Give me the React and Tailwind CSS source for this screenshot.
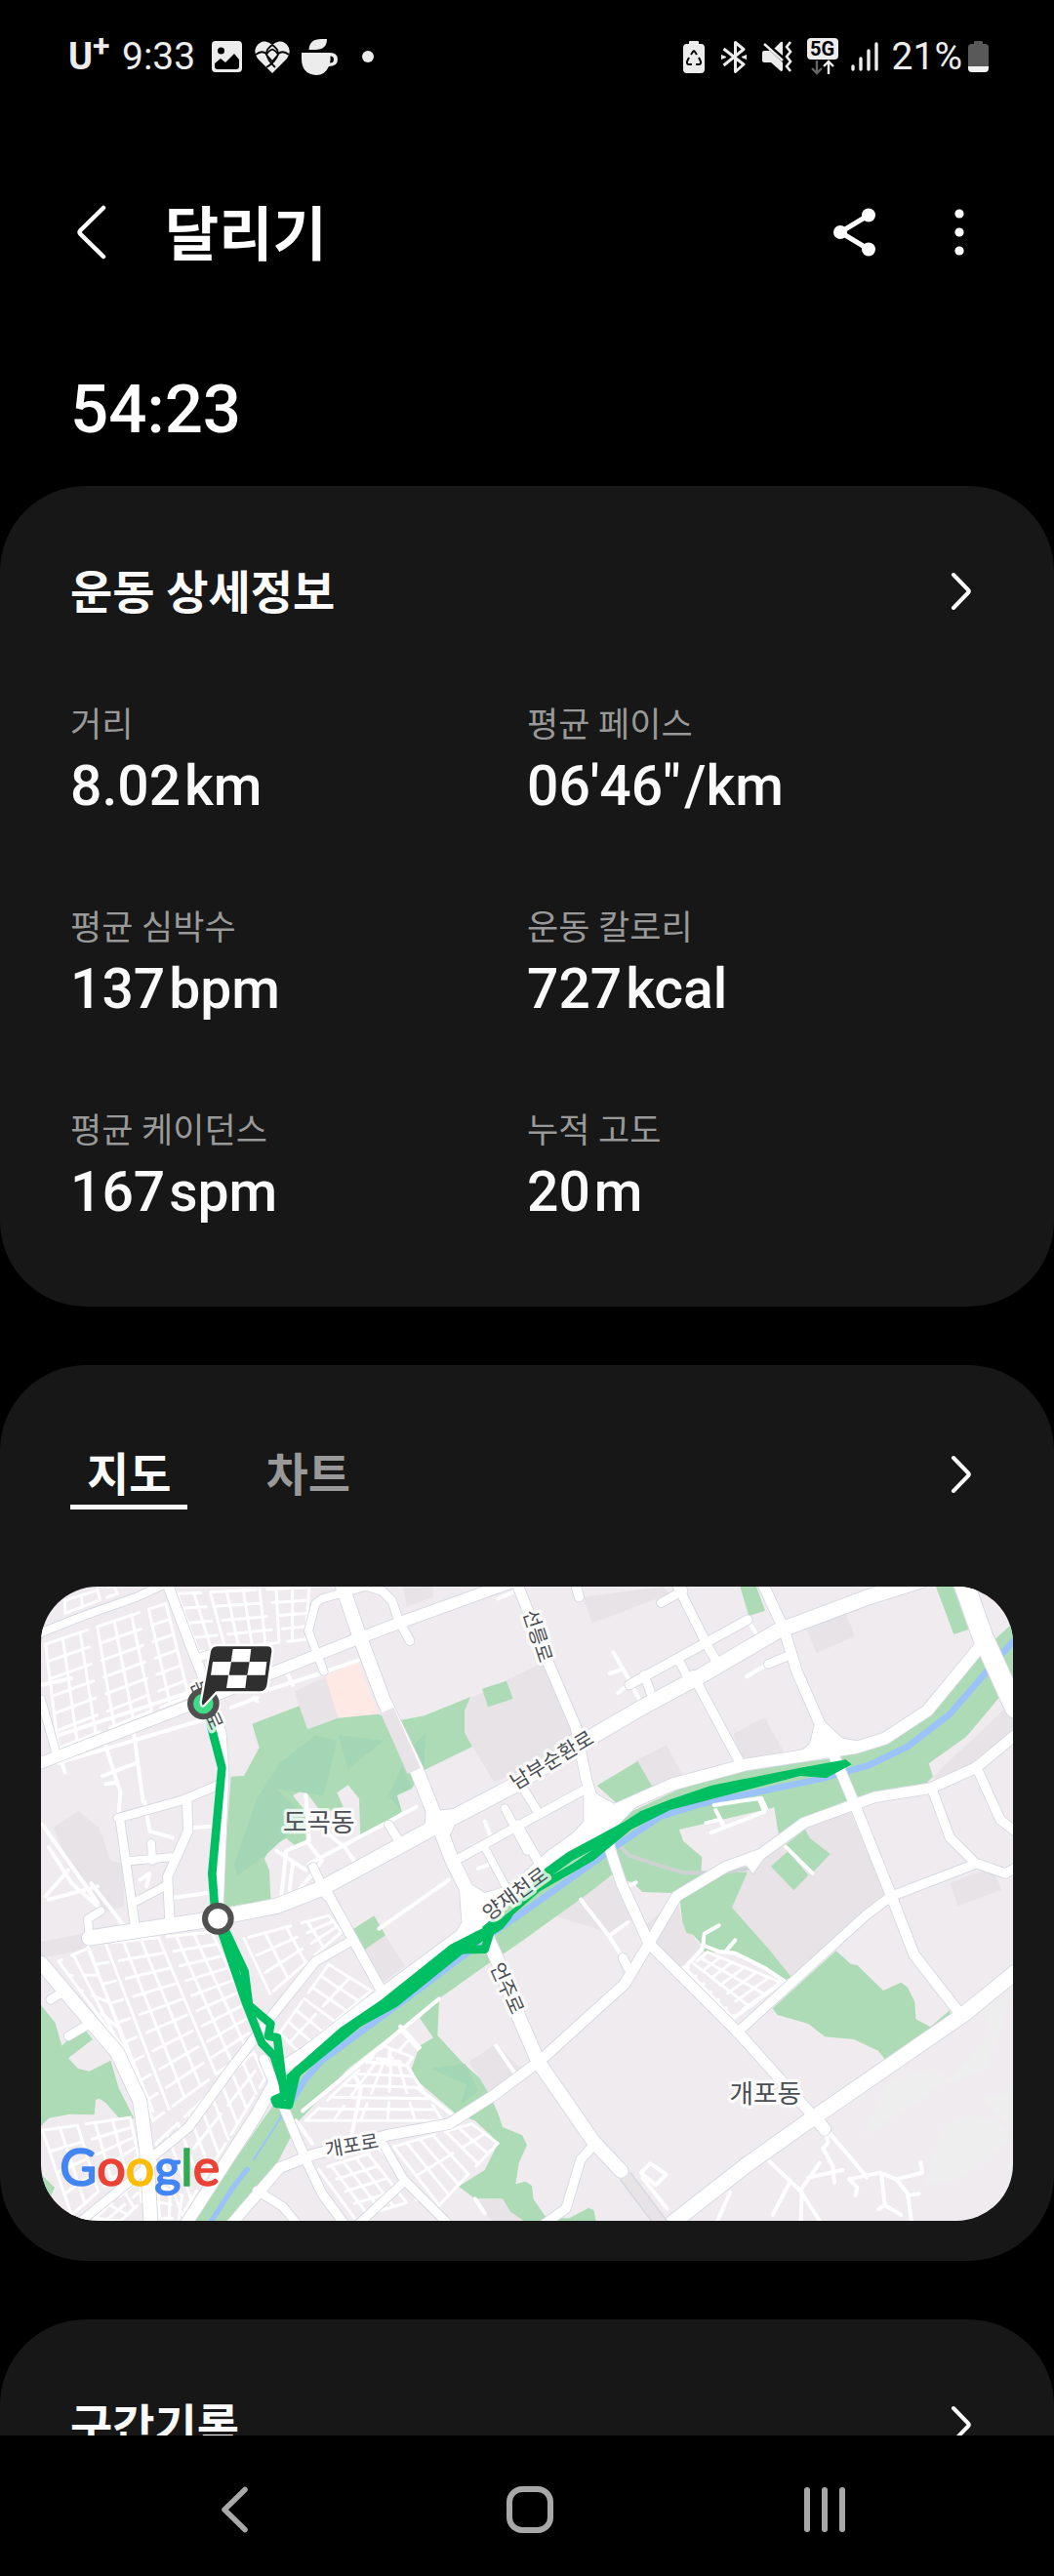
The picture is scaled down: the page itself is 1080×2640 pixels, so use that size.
import React, { useState } from "react";

const STATS = [
  { label: "거리", value: "8.02", unit: "km" },
  { label: "평균 페이스", value: "06'46\"", unit: "/km" },
  { label: "평균 심박수", value: "137", unit: "bpm" },
  { label: "운동 칼로리", value: "727", unit: "kcal" },
  { label: "평균 케이던스", value: "167", unit: "spm" },
  { label: "누적 고도", value: "20", unit: "m" },
];

/* ---------- map data ---------- */

const GREENS = [
  "M685,470L830,415L855,487L950,452L1070,440L1145,458L1215,445L1357,387L1338,430L1338,497L1362,540L1213,613L1175,670L1130,690L1145,740L1018,822L1014,700L980,658L946,682L965,725L900,745L845,672L810,690L850,740L850,835L820,847L790,822L745,845L723,885L738,920L742,1010L590,1036L620,632L660,630L707,543Z",
  "M1392,362L1467,338L1487,393L1410,418Z",
  "M2185,48L2235,48L2262,122L2212,138Z",
  "M2787,48L2840,48L2887,180L2842,195Z",
  "M3024,160L2925,250L2780,430L2630,530L2480,575L2200,610L2000,670L1850,740L1640,880L1470,1030L1300,1150L900,1490L780,1600L500,1998L620,1998L765,1815L830,1690L980,1530L1260,1315L1400,1215L1500,1148L1720,990L1790,935L1858,960L1885,987L1975,990L2000,1010L2008,1080L2020,1112L2040,1118L2060,1140L2075,1170L2165,1175L2260,1225L2320,1260L2342,1248L2275,1165L2160,1035L2208,925L2065,928L2068,880L2010,830L1998,795L2290,727L2303,808L2380,765L2500,710L2600,685L2755,655L2778,632L2765,592L2880,510L2985,385L3024,350Z",
  "M1745,660L1870,585L1920,672L1815,722Z",
  "M2325,842L2385,795L2400,822L2462,870L2405,930Z",
  "M2280,908L2332,862L2395,935L2350,982Z",
  "M2285,1345L2480,1168L2525,1208L2545,1212L2625,1290L2680,1265L2700,1280L2722,1325L2725,1378L2770,1402L2830,1350L2830,1380L2635,1508L2610,1475L2535,1440L2445,1432L2395,1392L2300,1365Z",
  "M36,1335L80,1390L100,1460L130,1430L175,1415L195,1440L120,1498L150,1530L185,1538L250,1505L275,1590L322,1682L280,1687L235,1635L215,1622L204,1626L200,1672L125,1670L60,1682L36,1706Z",
  "M990,1105L1060,1060L1095,1120L1030,1165Z",
  "M1200,1375L1260,1315L1255,1428L1330,1510L1385,1560L1410,1602L1440,1665L1455,1710L1515,1735L1530,1765L1505,1820L1495,1885L1525,1877L1545,1890L1550,1932L1590,1990L1660,1990L1720,1958L1735,1965L1742,1998L1520,1998L1480,1970L1455,1930L1370,1930L1320,1892L1400,1842L1442,1757L1370,1690L1310,1668L1190,1565L1175,1530L1200,1460L1242,1435Z",
  "M36,1855L78,1895L62,1932L36,1900Z",
];

const SHADES = [
  "M815,370L915,325L955,452L855,487Z",
  "M75,790L150,738L215,790L250,890L290,900L290,1030L235,1050L180,960L120,900Z",
  "M1700,80L1950,48L1970,70L1732,160Z",
  "M1360,390L1600,270L1690,520L1500,620L1430,650L1362,540L1338,497L1338,430Z",
  "M2390,180L2510,130L2538,200L2420,252Z",
  "M2165,500L2260,450L2322,560L2190,595Z",
  "M1865,583L1958,535L2010,630L1920,672Z",
  "M2250,880L2380,780L2520,735L2640,1000L2342,1248L2160,1035L2208,925Z",
  "M2830,960L2960,910L2988,980L2855,1030Z",
  "M2780,630L3024,400L3024,500L2900,600L2780,650Z",
  "M36,1140L190,1110L190,1160L36,1190Z",
  "M1030,1165L1092,1118L1155,1215L1080,1270Z",
  "M1350,1510L1435,1455L1520,1540L1410,1600L1385,1560Z",
  "M1880,1100L1990,1010L2008,1080L2075,1170L1990,1230L1905,1145Z",
  "M1600,1055L1730,960L1800,940L1850,1070L1790,1115Z",
  "M1380,1935L1455,1930L1520,1998L1420,1998Z",
  "M1150,50L1240,48L1240,80L1160,110Z",
];

const FAINT = [
  "M2560,1740L2640,1570L2780,1530L2825,1565L2960,1420L2925,1340L3024,1300L2940,1530L2780,1590L2720,1640Z",
  "M2750,1890L2810,1705L2890,1670L2990,1700L3024,1740L2860,1870Z",
  "M2930,1620L3024,1600L3024,1720Z",
];

const PARK_TONES = [
  "M630,900L700,700L770,590L880,505L945,522L905,690L760,670L850,760L720,880L640,935Z",
  "M950,505L1090,522L980,608Z",
  "M1235,1530L1340,1515L1380,1600L1325,1640L1345,1580Z",
  "M1105,690L1145,600L1175,665L1130,690L1145,740Z",
  "M1175,540L1218,500L1213,610Z",
];

const ROADS = [
  ["M36,190L160,140L330,80L410,44", 24],
  ["M425,40L500,240L540,340L590,500L598,620L580,1060", 30],
  ["M36,590L500,410L750,312L1000,212L1150,155L1480,36", 34],
  ["M515,268L600,240", 24],
  ["M36,395L80,550", 24],
  ["M1045,44L900,85L880,100L858,185L905,308", 24],
  ["M1030,44L1085,62L1115,92L1135,150L1170,215", 26],
  ["M960,40L1015,200L1090,400L1190,610L1250,760L1300,890L1360,1010L1400,1110L1445,1210L1500,1360L1565,1510L1735,1755L1820,1845", 42],
  ["M185,1128L530,1075L760,1030L900,975L1250,785L1480,665L1720,515L1900,410L2060,325L2300,185L2580,80L2740,30", 46],
  ["M185,1120L180,1070L220,1045", 24],
  ["M1500,40L1590,270L1680,480L1712,640L1730,700L1770,800L1790,870L1820,960L1905,1145L2180,1420L2400,1665L2445,1720", 32],
  ["M2925,230L2760,430L2630,515L2540,543L2200,596L1980,655L1800,735L1600,880L1480,990L1340,1110L1050,1325L850,1480L780,1525L700,1670L590,1840L480,2010", 36],
  ["M2255,40L2320,180L2360,310L2430,470L2470,560L2530,700L2650,1000L2720,1180L2860,1360", 32],
  ["M2870,30L2930,200L3030,420", 62],
  ["M1990,40L2090,240L2120,290", 28],
  ["M2040,320L2190,600", 28],
  ["M1845,350L2208,150", 28],
  ["M1942,98L2010,60", 26],
  ["M1890,320L1920,400", 26],
  ["M1995,270L2030,340", 26],
  ["M2272,286L2340,258", 26],
  ["M1680,44L1690,80", 28],
  ["M3030,505L2910,605L2770,668L2600,695L2530,720L2380,775L2250,870L2140,910L1990,1000L1905,1145L1830,1270L1565,1510L1430,1610L1290,1700L1100,1735L870,1795L770,1835L620,2010", 32],
  ["M2775,670L2830,820L2910,900L2650,1000L2570,1060L2175,1420", 28],
  ["M2910,600L2985,765L3030,800", 28],
  ["M2900,895L3000,930L3030,915", 28],
  ["M3030,1235L2870,1365L2420,1675L2390,1695L2200,1830L1970,2010", 46],
  ["M2430,1690L2450,1715", 28],
  ["M1825,1190L1840,1220", 28],
  ["M1735,1765L1695,1810L1650,1960L1580,2010", 28],
  ["M36,1205L150,1340L270,1480L340,1630L360,1780L374,2010", 42],
  ["M65,1318L110,1290", 26],
  ["M120,1430L180,1395", 26],
  ["M380,1800L490,1710L620,1530L760,1350L880,1200L985,1140", 28],
  ["M160,1998L380,1820", 26],
  ["M720,1500L850,1810L900,1915L970,2010", 28],
  ["M905,970L1085,1295", 30],
  ["M1090,1765L1150,1870L1290,2010", 26],
  ["M700,1905L780,1955L825,2010", 26],
  ["M1150,1880L1010,2010", 26],
  ["M272,760L470,705L600,650", 26],
  ["M278,760L325,1090", 26],
  ["M485,710L488,800L425,940L432,1080", 28],
  ["M305,892L435,880", 24],
  ["M330,1015L425,965", 24],
  ["M375,838L378,890", 24],
  ["M1310,890L1500,785L1715,668", 26],
  ["M1500,640L1560,735", 26],
  ["M1500,780L1580,920", 28],
  ["M1400,850L1470,980", 22],
  ["M1462,730L1530,860", 24],
  ["M1105,780L1140,835", 26],
  ["M872,910L915,1000", 26],
];

const JUNCTIONS = [
  "M1220,740L1330,730L1285,830L1215,800Z",
  "M1705,650L1750,690L1815,725L1900,690L1800,790L1640,870L1600,880L1705,770Z",
  "M2415,470L2445,465L2500,515L2560,525L2540,560L2350,575L2400,530Z",
  "M1320,940L1400,990L1500,960L1400,1090L1290,1150L1330,1080Z",
  "M2200,900L2260,880L2225,930Z",
];

const PATHS = [
  "M90,560L110,620", "M90,505L500,370", "M40,350L130,330", "M90,590L560,450", "M320,490L350,710", "M235,540L280,680L275,740",
  "M225,630L330,590", "M235,655L270,650", "M40,780L210,1020", "M120,920L50,1000", "M210,970L60,1010", "M60,850L130,960L210,1030", "M190,960L290,1090",
  "M355,710L370,800L440,820", "M500,790L560,785", "M440,1005L550,990", "M340,950L370,930L360,970",
  "M620,420L700,390M690,390L700,400", "M720,370L880,320L1010,275", "M790,310L810,350", "M860,900L1190,725", "M970,850L1005,900",
  "M850,690L860,830L790,860L775,1000", "M860,840L900,890L880,920L820,990", "M760,860L850,920", "M810,900L800,980", "M910,800L970,850",
  "M1075,1100L1290,950", "M1380,915L1420,900", "M1400,770L1420,820", "M1440,85L1500,60", "M1795,250L1830,310L1875,395", "M1785,315L1815,305", "M1810,375L1840,350",
  "M2205,325L2280,280", "M2215,160L2232,190", "M2105,720L2250,698L2265,730", "M2245,705L2260,740L2095,805", "M2110,735L2135,785", "M2080,775L2120,765",
  "M2325,848L2408,930", "M1695,1010L1780,1120L1825,1190", "M1785,1120L1840,1080", "M1835,970L1865,958",
  "M2015,1220L2070,1160L2075,1115L2120,1090", "M2070,1150L2120,1170L2170,1175L2260,1220L2320,1260L2160,1378L2010,1220", "M2140,1170L2170,1135",
  "M2275,1815L2370,1905L2430,1998", "M2370,1905L2430,1820", "M2395,1865L2500,1842", "M2335,1885L2285,1980", "M2375,1910L2372,1998", "M2155,1910L2115,1998",
  "M2450,1730L2455,1760L2440,1775L2470,1830L2475,1880", "M2460,1730L2530,1810L2575,1865", "M2520,1870L2615,1850L2665,1870L2700,1915L2712,1998", "M2520,1870L2545,1895L2540,1920",
  "M2620,1860L2630,1950L2680,1980M2630,1950L2610,1962", "M2665,1870L2745,1850L2740,1818", "M2700,1920L2735,1915",
  "M1880,1850L1910,1822L1958,1855L1925,1888Z", "M1885,1865L1960,1960", "M1435,1460L1490,1540",
  "M840,1660L1260,1315", "M1140,1400L1200,1465", "M820,1690L870,1760", "M1195,1590L1310,1680", "M1370,1930L1400,1975",
  "M1110,1470L1105,1520M1070,1500L1140,1510", "M1000,1550L1020,1590L990,1740",
];

/* Street grids: four corners of a district and the number of streets each way. */
const DISTRICTS = [
  [[50, 225], [420, 100], [490, 385], [90, 545], 7, 6],
  [[110, 90], [260, 44], [270, 70], [110, 130], 3, 1],
  [[455, 70], [860, 50], [850, 210], [520, 250], 8, 4],
  [[180, 1150], [560, 1110], [720, 1440], [380, 1690], 7, 9],
  [[90, 1200], [180, 1160], [380, 1660], [280, 1460], 2, 6],
  [[660, 1130], [920, 1060], [960, 1110], [740, 1300], 4, 3],
  [[770, 1420], [920, 1210], [1050, 1290], [830, 1480], 6, 2],
  [[390, 1760], [690, 1480], [725, 1560], [470, 1980], 9, 2],
  [[850, 1690], [1040, 1510], [1160, 1520], [1270, 1690], 5, 5],
  [[1040, 1510], [1140, 1410], [1195, 1470], [1160, 1520], 2, 2],
  [[890, 1840], [1080, 1780], [1200, 1930], [1000, 1990], 5, 4],
  [[1120, 1770], [1360, 1700], [1440, 1760], [1260, 1950], 6, 2],
  [[40, 1720], [310, 1680], [335, 1800], [130, 1980], 5, 4],
  [[200, 1990], [340, 1870], [345, 1940], [280, 1998], 3, 2],
  [[395, 1890], [470, 1920], [460, 1990], [400, 1990], 2, 2],
  [[2020, 1225], [2085, 1172], [2310, 1265], [2160, 1372], 3, 6],
];

function districtPath([a, b, c, d, n, m], crosswise) {
  const mix = (p, q, t) => [p[0] + (q[0] - p[0]) * t, p[1] + (q[1] - p[1]) * t];
  const seg = (p, q) => "M" + p.map(Math.round).join(",") + "L" + q.map(Math.round).join(",");
  let out = "";
  if (crosswise) {
    for (let j = 0; j <= m; j++) out += seg(mix(a, d, j / m), mix(b, c, j / m));
  } else {
    for (let i = 0; i <= n; i++) out += seg(mix(a, b, i / n), mix(d, c, i / n));
  }
  return out;
}

const LABELS = [
  { text: "도곡동", x: 890, y: 800, size: 80, angle: 0 },
  { text: "개포동", x: 2263, y: 1635, size: 80, angle: 0 },
  { text: "개포로", x: 995, y: 1787, size: 60, angle: -10 },
  { text: "남부순환로", x: 1618, y: 600, size: 62, angle: -31 },
  { text: "양재천로", x: 1506, y: 1010, size: 62, angle: -36 },
  { text: "선릉로", x: 1543, y: 206, size: 60, angle: 72 },
  { text: "언주로", x: 1450, y: 1292, size: 60, angle: 66 },
  { text: "논현로", x: 527, y: 420, size: 58, angle: 66 },
];

const WORDMARK = [
  ["G", "#4285f4"],
  ["o", "#ea4335"],
  ["o", "#fbbc05"],
  ["g", "#4285f4"],
  ["l", "#34a853"],
  ["e", "#ea4335"],
];

function RouteMap() {
  return (
    <svg
      viewBox="36 48 2988 1950"
      className="block h-auto w-full"
      role="img"
      aria-label="달리기 경로 지도"
      strokeLinejoin="round"
      strokeLinecap="round"
      fill="none"
    >
      <rect x="36" y="48" width="2988" height="1950" fill="#efebef" />
      <g fill="#e7e3e7">{SHADES.map((d) => <path key={d} d={d} />)}</g>
      <g fill="#eeeeee">{FAINT.map((d) => <path key={d} d={d} />)}</g>
      <path d="M910,325L1010,280L1072,440L950,453Z" fill="#ffe9e4" />
      <g fill="#acdbb6">{GREENS.map((d) => <path key={d} d={d} />)}</g>
      <g fill="#a2d6b4">{PARK_TONES.map((d) => <path key={d} d={d} />)}</g>
      <path d="M1815,845L1845,875L1920,900L2010,928L2130,928L2210,915" stroke="#cfd2d3" strokeWidth="12" />
      <path
        d="M3030,210L2990,255L2830,440L2700,540L2580,598L2430,640L2200,688L2060,718L1940,755L1820,835L1700,920L1560,1020L1430,1110L1200,1285L900,1505L850,1560L780,1670"
        stroke="#9cc3f9"
        strokeWidth="20"
      />
      <path d="M780,1670L690,1810" stroke="#9cc3f9" strokeWidth="6" />
      <path d="M670,1840L630,1890L560,1998" stroke="#9cc3f9" strokeWidth="16" />
      <g stroke="#ffffff" strokeWidth="9">
        {DISTRICTS.map((d, i) => (
          <g key={i}>
            <path d={districtPath(d, false)} />
            <path d={districtPath(d, true)} strokeDasharray="135 34" strokeDashoffset={i * 31} />
          </g>
        ))}
      </g>
      <g stroke="#ffffff" strokeWidth="12">{PATHS.map((d) => <path key={d} d={d} />)}</g>
      <g stroke="#d3d7df">{ROADS.map(([d, w]) => <path key={d} d={d} strokeWidth={w + 5} />)}</g>
      <g fill="#ffffff" stroke="#d3d7df" strokeWidth="5">{JUNCTIONS.map((d) => <path key={d} d={d} />)}</g>
      <g stroke="#ffffff">{ROADS.map(([d, w]) => <path key={d} d={d} strokeWidth={w} />)}</g>
      <g fill="#ffffff">{JUNCTIONS.map((d) => <path key={d} d={d} />)}</g>
      <path d="M1100,428L1183,615" stroke="#e7e3e7" strokeWidth="44" strokeLinecap="butt" />
      <path d="M1832,1860L1945,2010" stroke="#d3d7df" strokeWidth="42" strokeLinecap="butt" />
      <path d="M1832,1860L1945,2010" stroke="#e7e3e7" strokeWidth="34" strokeLinecap="butt" />

      <g stroke="#00bf63" strokeWidth="26" strokeLinecap="butt">
        <path d="M553,455L566,505L592,605L562,930L572,1060" />
        <path d="M585,1090L665,1325L715,1452L752,1490L790,1610L755,1625L760,1638L798,1642L822,1540" />
        <path d="M600,1100L662,1232L675,1335L742,1392L735,1430L762,1435L780,1580L785,1620" />
        <path d="M1300,1165L1400,1163L1425,1085L1400,1105" />
        <path d="M790,1585L830,1530" />
      </g>
      <path
        d="M790,1550L955,1405L1080,1320L1295,1148L1440,1075L1500,1030L1480,1070L1455,1100L1330,1180L1130,1340L1020,1400L835,1550L795,1600Z"
        fill="#00bf63"
      />
      <path
        d="M1450,1090L1585,915L1655,865L1830,770L1880,738L1970,703L2095,660L2370,605L2510,580L2528,595L2450,637L2370,630L1970,735L1850,795L1735,890L1570,985Z"
        fill="#00bf63"
      />
      <path d="M1608,935L1670,890L1732,857L1670,900Z" fill="#a6dfb8" />

      <g
        fill="#4b4e53"
        stroke="#ffffff"
        strokeOpacity="0.75"
        strokeWidth="20"
        paintOrder="stroke"
        textAnchor="middle"
        className="[font-family:'Noto_Sans_CJK_KR',sans-serif]"
      >
        {LABELS.map((l) => (
          <text key={l.text} fontSize={l.size} transform={`translate(${l.x} ${l.y}) rotate(${l.angle})`}>
            {l.text}
          </text>
        ))}
      </g>

      <circle cx="580" cy="1069" r="40" fill="#ffffff" stroke="#505050" strokeWidth="18" />
      <circle cx="535" cy="408" r="40" fill="#3edc87" stroke="#505050" strokeWidth="18" />
      <path
        d="M578,228H730Q751,228 748,250L734,350Q731,373 710,373H576L540,412Q528,422 527,404L554,250Q557,228 578,228Z"
        fill="#2f2f2f"
        stroke="#ffffff"
        strokeWidth="7"
      />
      <path
        d="M626,240H682L677,279H730L725,320H669L664,360H606L612,320H558L564,279H620Z"
        fill="#ffffff"
      />
      <path d="M621,280H677L670,320H614Z" fill="#2f2f2f" />

      <text x="94" y="1891" fontSize="156" strokeWidth="5" className="[font-family:Lato,sans-serif]">
        {WORDMARK.map(([letter, color], i) => (
          <tspan key={i} fill={color} stroke={color}>{letter}</tspan>
        ))}
      </text>
    </svg>
  );
}

/* ---------- small parts ---------- */

function Chevron() {
  return (
    <svg width="22" height="40" viewBox="0 0 22 40" fill="none" stroke="#fafafa" strokeWidth="4" strokeLinecap="round" strokeLinejoin="round">
      <path d="M3 3L18 18.5Q19.500 20 18 21.500L3 37" />
    </svg>
  );
}

function MoreButton({ label }) {
  return (
    <button type="button" aria-label={label} className="flex h-[72px] items-center">
      <Chevron />
    </button>
  );
}

function CardTitle({ children, moreLabel }) {
  return (
    <div className="flex items-center justify-between pr-[84px] pl-[72px]">
      <h2 className="pt-1 text-[47px] leading-[72px] font-bold text-[#fafafa]">{children}</h2>
      <MoreButton label={moreLabel} />
    </div>
  );
}

function Stat({ label, value, unit }) {
  return (
    <div>
      <dt className="text-[35px] leading-[52px] text-[#999999]">{label}</dt>
      <dd className="flex gap-1 text-[57px] leading-[72px] font-medium text-[#fafafa]">
        <span>{value}</span>
        <span>{unit}</span>
      </dd>
    </div>
  );
}

function StatusBar() {
  return (
    <div className="flex h-[116px] shrink-0 items-center justify-between pr-[67px] pl-[70px] text-[39px] leading-none text-[#ececec]">
      <div className="flex items-center">
        <span className="flex w-[55px] items-center text-[38px] font-bold">
          U<span className="-mt-[22px] text-[32px]">+</span>
        </span>
        <span className="w-[92px]">9:33</span>
        <svg width="31" height="32" viewBox="0 0 31 32" className="mr-[13px]">
          <path fill="#ececec" fillRule="evenodd" d="M4 0H27Q31 0 31 4V28Q31 32 27 32H4Q0 32 0 28V4Q0 0 4 0ZM9.500 6.500A3.500 3.500 0 1 0 9.500 13.500A3.500 3.500 0 1 0 9.500 6.500ZM3 23V26Q3 29 6 29H25Q28 29 28 26V19L23 13L14 22L9 18Z" />
        </svg>
        <svg width="36" height="33" viewBox="0 0 36 33" className="mr-[12px]">
          <path fill="#ececec" d="M18 33L3 18Q-1.500 12 1.500 6Q5 0 11 .5Q15 1 18 4Q21 1 25 .5Q31 0 34.500 6Q37.500 12 33 18Z" />
          <g fill="none" stroke="#000" strokeWidth="1.800">
            <path d="M1 14Q7 9 12 13Q14 21 21 27" />
            <path d="M35 14Q29 9 24 13Q22 21 12 27" />
            <path d="M18 4Q12 8 12 13" />
            <path d="M18 4Q24 8 24 13" />
          </g>
          <path fill="#ececec" stroke="#000" strokeWidth="1.600" d="M18 8.500Q22 10 24 14L18 21L12 14Q14 10 18 8.500Z" />
        </svg>
        <svg width="37" height="37" viewBox="0 0 37 37" className="mr-[25px]">
          <path fill="#ececec" d="M7.500 11Q8 0 20 0H26Q26 11 14 11ZM0 14H29Q37 14 37 21Q37 28 28 28Q24 37 15 37Q0 36 0 20Z" />
          <path fill="#000" d="M29.500 17.500Q33 17.500 33 21Q33 24.500 29 24.500Q30 21 29.500 17.500Z" />
        </svg>
        <span className="size-3 rounded-full bg-[#ececec]" />
      </div>
      <div className="flex items-center">
        <svg width="22" height="33" viewBox="0 0 22 33" className="mr-[17px]">
          <path fill="#ececec" d="M7 0H15Q16 0 16 1V3H19Q22 3.500 22 7V29Q22 33 18 33H4Q0 33 0 29V7Q0 3.500 3 3H6V1Q6 0 7 0Z" />
          <path fill="none" stroke="#000" strokeWidth="2" d="M8 14L10 11Q11 9.500 12 11L14 14M16 17L18 21Q18.500 24 16 24H13M9 24H6Q3.500 24 4 21L6 17" />
        </svg>
        <svg width="26" height="33" viewBox="0 0 26 33" fill="none" stroke="#ececec" strokeWidth="3" strokeLinejoin="round" className="mr-[16px]">
          <path d="M2.500 8L23 24L14.500 31.500V1.500L23 8.500L2.500 25" />
          <path d="M0 14.500L5 16.500L0 18.500ZM26 14.500L21 16.500L26 18.500Z" strokeWidth="1" fill="#ececec" />
        </svg>
        <svg width="31" height="32" viewBox="0 0 31 32" fill="#ececec" className="mr-[15px]">
          <path d="M0 12Q0 10 2 10H8L21 22V30Q20 32 18 30L9 22H2Q0 22 0 20Z" />
          <path d="M12 8L19 1Q21 0 21 2V15Z" />
          <path d="M3 1L23 19" stroke="#000" strokeWidth="3" />
          <path d="M2 3L21 20" stroke="#ececec" strokeWidth="2.400" />
          <path d="M29 1L25 6L29 11L25 16L29 21L25 26L29 31" fill="none" stroke="#ececec" strokeWidth="2.600" />
        </svg>
        <span className="mr-[13px] flex flex-col items-center">
          <span className="h-[22px] w-8 rounded-[4px] bg-[#ececec] text-center text-[20px] leading-[23px] font-bold text-black">5G</span>
          <svg width="24" height="16" viewBox="0 0 24 16" fill="none" strokeWidth="2.400">
            <path d="M6 1V14M1 9L6 14L11 9" stroke="#666" />
            <path d="M18 15V2M13 7L18 2L23 7" stroke="#ececec" />
          </svg>
        </span>
        <svg width="28" height="30" viewBox="0 0 28 30" fill="none" stroke="#ececec" strokeWidth="3.400" strokeLinecap="round" className="mr-[14px]">
          <path d="M2 25V28M10 17V28M18 9V28M26 2V28" />
        </svg>
        <span className="mr-[6px]">21%</span>
        <svg width="21" height="32" viewBox="0 0 21 32">
          <path fill="#595959" d="M7 0H14Q15 0 15 1V3H18Q21 3.500 21 6V26H0V6Q0 3.500 3 3H6V1Q6 0 7 0Z" />
          <path fill="#f2f2f2" d="M0 26H21V28Q21 32 17 32H4Q0 32 0 28Z" />
        </svg>
      </div>
    </div>
  );
}

export default function App() {
  const [tab, setTab] = useState("지도");
  return (
    <div className="flex h-screen flex-col overflow-hidden bg-black text-white [font-family:Roboto,'Noto_Sans_CJK_KR',sans-serif]">
      <StatusBar />

      <header className="flex h-[244px] shrink-0 items-center pr-[92px] pl-[78px]">
        <button type="button" aria-label="뒤로" className="mr-[60px]">
          <svg width="31" height="56" viewBox="0 0 31 56" fill="none" stroke="#fff" strokeWidth="4.500" strokeLinecap="round" strokeLinejoin="round">
            <path d="M28 3L4.500 26Q2.500 28 4.500 30L28 53" />
          </svg>
        </button>
        <h1 className="grow pt-2 text-[60px] leading-[80px] font-bold">달리기</h1>
        <button type="button" aria-label="공유" className="mr-[80px]">
          <svg width="44" height="50" viewBox="0 0 44 50" fill="#fff" stroke="#fff">
            <path d="M36 7.500L7 25L36 42.500" fill="none" strokeWidth="5" />
            <circle cx="36" cy="7.500" r="7" stroke="none" />
            <circle cx="7" cy="25" r="7" stroke="none" />
            <circle cx="36" cy="42.500" r="7" stroke="none" />
          </svg>
        </button>
        <button type="button" aria-label="옵션 더보기">
          <svg width="10" height="50" viewBox="0 0 10 50" fill="#fff">
            <circle cx="5" cy="6" r="4.600" />
            <circle cx="5" cy="25" r="4.600" />
            <circle cx="5" cy="44" r="4.600" />
          </svg>
        </button>
      </header>

      <main className="min-h-0 grow overflow-y-auto [scrollbar-width:none]">
        <p className="px-[72px] pt-[2px] pb-[20px] text-[69px] leading-[116px] font-medium">54:23</p>

        <div className="flex flex-col gap-[60px]">
          <section className="rounded-[88px] bg-[#171717] pt-[70px] pb-[81px]">
            <CardTitle moreLabel="운동 상세정보 보기">운동 상세정보</CardTitle>
            <dl className="mt-[74px] grid grid-cols-2 gap-y-[84px] px-[72px]">
              {STATS.map((s) => (
                <Stat key={s.label} {...s} />
              ))}
            </dl>
          </section>

          <section className="rounded-[88px] bg-[#171717] pt-[76px] pb-[41px]">
            <div className="flex items-center justify-between pr-[84px] pl-[72px]">
              <div role="tablist" className="flex gap-[63px]">
                {["지도", "차트"].map((name) => (
                  <button
                    key={name}
                    type="button"
                    role="tab"
                    aria-selected={tab === name}
                    onClick={() => setTab(name)}
                    className={
                      "border-b-[5px] px-[17px] pt-[6px] text-[47px] leading-[60px] font-bold " +
                      (tab === name ? "border-[#fafafa] text-[#fafafa]" : "border-transparent text-[#999999]")
                    }
                  >
                    {name}
                  </button>
                ))}
              </div>
              <MoreButton label="지도 크게 보기" />
            </div>
            <div className="mx-[42px] mt-[79px] overflow-hidden rounded-[58px]">
              <RouteMap />
            </div>
          </section>

          <section className="rounded-[88px] bg-[#171717] pt-[70px] pb-[81px]">
            <CardTitle moreLabel="구간기록 보기">구간기록</CardTitle>
          </section>
        </div>
      </main>

      <nav className="flex h-[144px] shrink-0 items-center justify-between bg-black pt-2 pr-[205px] pl-[210px]">
        <button type="button" aria-label="뒤로" className="flex w-[60px] justify-center">
          <svg width="28" height="48" viewBox="0 0 28 48" fill="none" stroke="#a8a8a8" strokeWidth="5.500" strokeLinecap="round" strokeLinejoin="round">
            <path d="M25 3.500L4 24L25 44.500" />
          </svg>
        </button>
        <button type="button" aria-label="홈" className="flex w-[60px] justify-center">
          <span className="size-12 rounded-[16px] border-[6px] border-[#a8a8a8]" />
        </button>
        <button type="button" aria-label="최근 앱" className="flex w-[60px] justify-center gap-3">
          <span className="h-[46px] w-[6px] rounded-full bg-[#a8a8a8]" />
          <span className="h-[46px] w-[6px] rounded-full bg-[#a8a8a8]" />
          <span className="h-[46px] w-[6px] rounded-full bg-[#a8a8a8]" />
        </button>
      </nav>
    </div>
  );
}
